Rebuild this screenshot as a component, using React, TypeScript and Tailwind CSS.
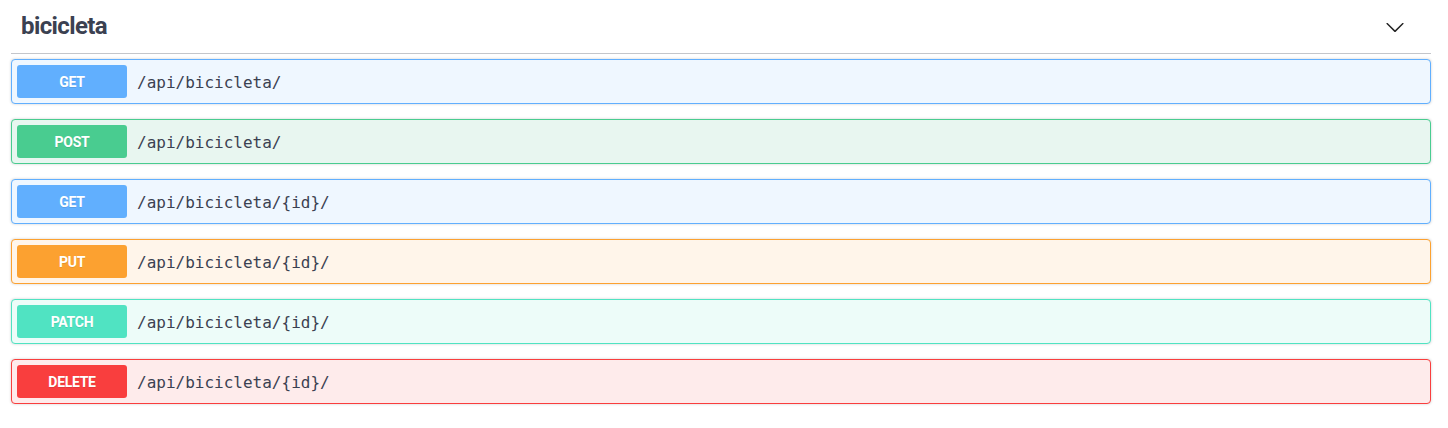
import React from "react";

type Op = { method: string; path: string; badge: string; bg: string; border: string };

const ops: Op[] = [
  { method: "GET", path: "/api/bicicleta/", badge: "bg-[#61affe]", bg: "bg-[#eff7ff]", border: "border-[#61affe]" },
  { method: "POST", path: "/api/bicicleta/", badge: "bg-[#49cc90]", bg: "bg-[#e8f6f0]", border: "border-[#49cc90]" },
  { method: "GET", path: "/api/bicicleta/{id}/", badge: "bg-[#61affe]", bg: "bg-[#eff7ff]", border: "border-[#61affe]" },
  { method: "PUT", path: "/api/bicicleta/{id}/", badge: "bg-[#fca130]", bg: "bg-[#fff5ea]", border: "border-[#fca130]" },
  { method: "PATCH", path: "/api/bicicleta/{id}/", badge: "bg-[#50e3c2]", bg: "bg-[#edfcf9]", border: "border-[#50e3c2]" },
  { method: "DELETE", path: "/api/bicicleta/{id}/", badge: "bg-[#f93e3e]", bg: "bg-[#feebeb]", border: "border-[#f93e3e]" },
];

export default function App() {
  return (
    <div className="w-[1448px] h-[428px] bg-white pl-[11px] pr-[17px]">
      <div className="flex items-center justify-between h-[54px] border-b border-[#c4c6cb] pl-[10px] pr-[26px]">
        <h3
          className="text-[24px] font-bold text-[#3b4151] leading-[33px] tracking-[-0.6px]"
          style={{ fontFamily: "Roboto, 'Open Sans', sans-serif" }}
        >
          bicicleta
        </h3>
        <svg width="20" height="20" viewBox="0 0 20 20" className="text-[#222]">
          <path
            fill="currentColor"
            d="M17.418 6.109c.272-.268.709-.268.979 0s.271.701 0 .969l-7.908 7.83c-.27.268-.707.268-.979 0l-7.908-7.83c-.27-.268-.27-.701 0-.969.271-.268.709-.268.979 0L10 13.25l7.418-7.141z"
          />
        </svg>
      </div>
      <div className="flex flex-col gap-[15px] mt-[5px]">
        {ops.map((op, i) => (
          <div
            key={i}
            className={`flex items-center h-[45px] rounded-[4px] border ${op.border} ${op.bg} p-[5px] shadow-[0_0_3px_rgba(0,0,0,0.19)]`}
          >
            <div
              className={`w-[110px] h-[33px] pt-[2px] rounded-[3px] ${op.badge} flex items-center justify-center text-white text-[14px] font-bold tracking-[-0.3px] [text-shadow:0_1px_0_rgba(0,0,0,0.1)]`}
              style={{ fontFamily: "Roboto, 'Open Sans', sans-serif" }}
            >
              {op.method}
            </div>
            <div
              className="pl-[10px] pt-[2px] text-[16px] font-normal text-[#3b4151]"
              style={{ fontFamily: "'DejaVu Sans Mono', monospace" }}
            >
              {op.path}
            </div>
          </div>
        ))}
      </div>
    </div>
  );
}
